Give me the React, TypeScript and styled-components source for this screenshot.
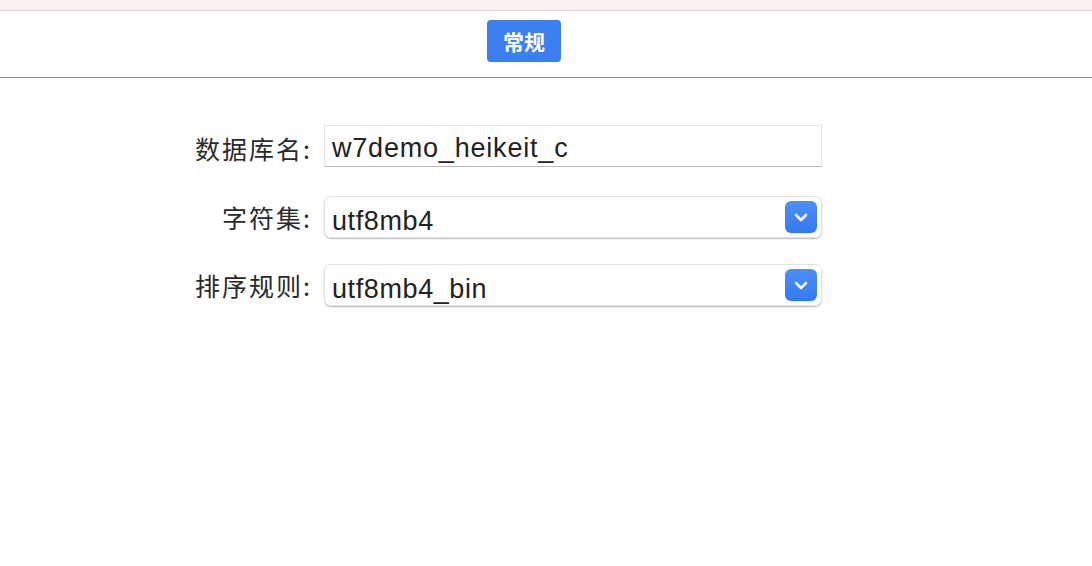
import React from "react";
import styled, { createGlobalStyle } from "styled-components";

const Global = createGlobalStyle`
  html, body { margin: 0; padding: 0; background: #fff; }
  body { font-family: "Noto Sans", "Noto Sans CJK SC", sans-serif; color: #222; }
`;

const Page = styled.div`
  width: 1092px;
  height: 566px;
  display: flex;
  flex-direction: column;
  background: #fff;
`;

const TopStrip = styled.div`
  height: 10px;
  background: #f8f1f0;
  border-bottom: 1px solid #dcdcdc;
`;

const Toolbar = styled.div`
  height: 67px;
  box-sizing: border-box;
  padding: 9px 44px 0 0;
  display: flex;
  justify-content: center;
  align-items: flex-start;
  border-bottom: 1px solid #8a8a8a;
`;

const TabButton = styled.button`
  width: 74px;
  height: 42px;
  border: none;
  border-radius: 4px;
  background: #3b7ff0;
  color: #fff;
  font-family: "Noto Sans CJK SC", sans-serif;
  font-size: 21px;
  font-weight: 600;
  padding: 0;
`;

const Form = styled.div`
  margin-top: 47px;
  margin-left: 162px;
  display: grid;
  grid-template-columns: 150px 498px;
  column-gap: 12px;
  row-gap: 26px;
  align-items: center;
`;

const Label = styled.label`
  text-align: right;
  font-family: "Noto Sans CJK SC", sans-serif;
  font-size: 25px;
  letter-spacing: 2px;
  color: #2a2a2a;
  white-space: nowrap;
`;

const TextField = styled.div`
  height: 42px;
  margin-bottom: 3px;
  box-sizing: border-box;
  border: 1px solid #e4e4e4;
  border-bottom: 1px solid #b8b8b8;
  display: flex;
  align-items: center;
  padding: 4px 0 0 7px;
  font-family: "Liberation Sans", sans-serif;
  font-size: 27px;
  letter-spacing: 0.8px;
  color: #222;
`;

const SelectBox = styled.div`
  height: 42px;
  box-sizing: border-box;
  border: 1px solid #e2e2e2;
  border-radius: 7px;
  box-shadow: 0 1px 1.5px rgba(0, 0, 0, 0.28);
  display: flex;
  align-items: center;
  justify-content: space-between;
  padding: 0 4px 0 7px;
  font-family: "Liberation Sans", sans-serif;
  font-size: 27px;
  letter-spacing: 0.6px;
  color: #222;
`;

const SelectText = styled.span`
  padding-top: 8px;
`;

const Chevron = styled.div`
  width: 32px;
  height: 32px;
  border-radius: 6px;
  background: linear-gradient(#4b90f8, #3478f0);
  display: flex;
  align-items: center;
  justify-content: center;
`;

const ChevronIcon = () => (
  <svg width="14" height="9" viewBox="0 0 14 9">
    <path d="M2 2 L7 7 L12 2" fill="none" stroke="#fff" strokeWidth="2.6" strokeLinecap="round" strokeLinejoin="round" />
  </svg>
);

export default function App() {
  return (
    <Page>
      <Global />
      <TopStrip />
      <Toolbar>
        <TabButton>常规</TabButton>
      </Toolbar>
      <Form>
        <Label>数据库名:</Label>
        <TextField>w7demo_heikeit_c</TextField>
        <Label>字符集:</Label>
        <SelectBox>
          <SelectText>utf8mb4</SelectText>
          <Chevron><ChevronIcon /></Chevron>
        </SelectBox>
        <Label>排序规则:</Label>
        <SelectBox>
          <SelectText>utf8mb4_bin</SelectText>
          <Chevron><ChevronIcon /></Chevron>
        </SelectBox>
      </Form>
    </Page>
  );
}
